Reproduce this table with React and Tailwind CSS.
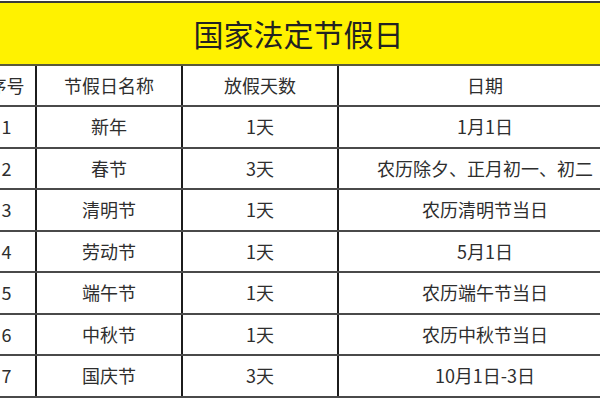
import React from "react";

const rows = [
  ["1", "新年", "1天", "1月1日"],
  ["2", "春节", "3天", "农历除夕、正月初一、初二"],
  ["3", "清明节", "1天", "农历清明节当日"],
  ["4", "劳动节", "1天", "5月1日"],
  ["5", "端午节", "1天", "农历端午节当日"],
  ["6", "中秋节", "1天", "农历中秋节当日"],
  ["7", "国庆节", "3天", "10月1日-3日"],
];

const Row = ({ cells, className }) => (
  <div className={`grid grid-cols-[59px_146px_156px_292px] border-b-2 border-[#4a4a4a] ${className}`}>
    {cells.map((c, i) => (
      <div
        key={i}
        className={`flex items-center justify-center ${i < 3 ? "border-r-2 border-[#1c1c1c]" : ""}`}
      >
        {c}
      </div>
    ))}
  </div>
);

export default function App() {
  return (
    <div
      className="w-[600px] h-[400px] overflow-hidden bg-white pt-[1px] text-[#2e2e2e]"
      style={{ fontFamily: '"Noto Sans CJK SC", "Noto Sans", sans-serif' }}
    >
      <div className="ml-[-22px] w-[653px]">
        {/* Title band */}
        <div className="h-[65px] border-t-2 border-b-2 border-t-[#3a3a3a] border-b-[#5a5a3a] bg-[#fff200] flex items-center justify-center">
          <span className="text-[30px] leading-none text-[#222] pr-[12px] pb-[2px]">国家法定节假日</span>
        </div>

        {/* Header */}
        <Row cells={["序号", "节假日名称", "放假天数", "日期"]} className="h-[41px] text-[18px]" />

        {rows.map((r) => (
          <Row key={r[0]} cells={r} className="h-[41.5px] text-[18px]" />
        ))}
      </div>
    </div>
  );
}
